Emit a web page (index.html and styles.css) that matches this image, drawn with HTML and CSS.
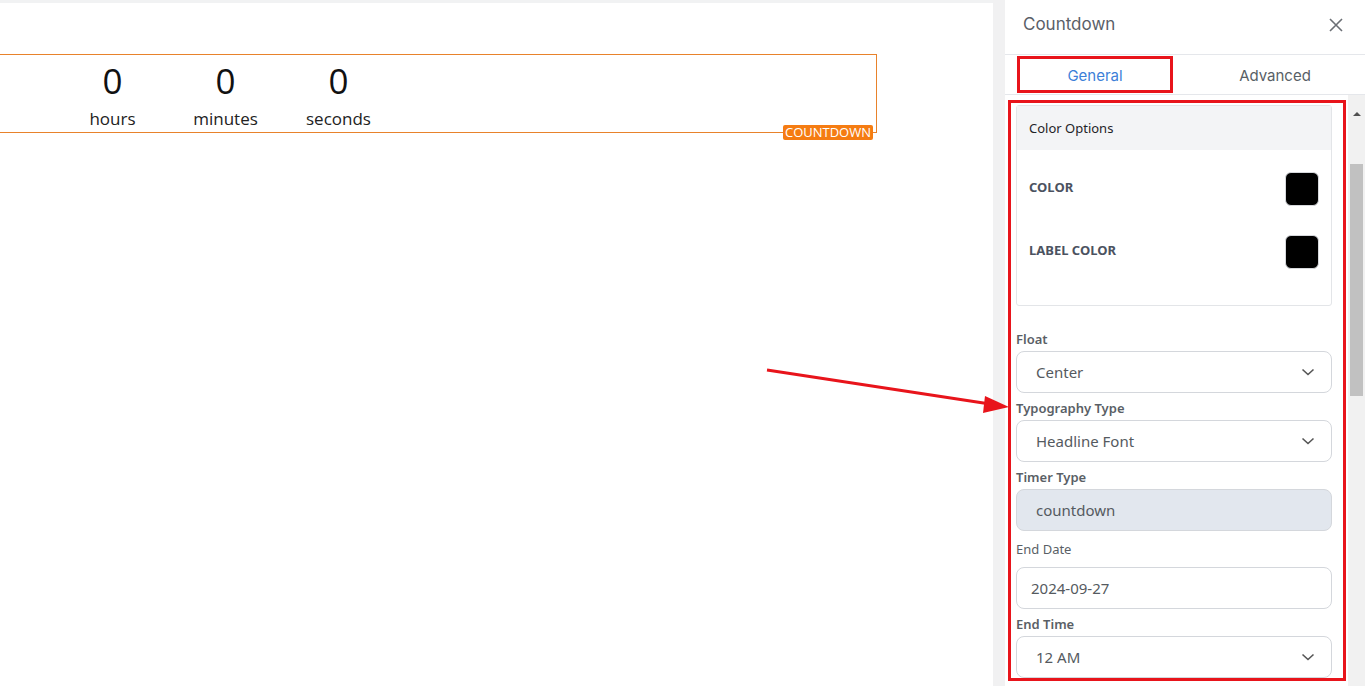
FILE: index.html
```html
<!DOCTYPE html>
<html lang="en">
<head>
    <meta charset="UTF-8">
    <title>Countdown Editor</title>
    <link rel="stylesheet" href="styles.css">
</head>
<body>

    <div class="canvas">
        <div class="countdown">
            <div class="unit">
                <div class="num">0</div>
                <div class="unit-label">hours</div>
            </div>
            <div class="unit">
                <div class="num">0</div>
                <div class="unit-label">minutes</div>
            </div>
            <div class="unit">
                <div class="num">0</div>
                <div class="unit-label">seconds</div>
            </div>
            <span class="badge">COUNTDOWN</span>
        </div>
    </div>

    <div class="gutter"></div>

    <div class="panel">
        <div class="panel-header">
            <span class="panel-title">Countdown</span>
            <svg class="close" width="16" height="16" viewBox="0 0 16 16">
                <path d="M2 2 L14 14 M14 2 L2 14" stroke="#6b6f75" stroke-width="1.6" fill="none"/>
            </svg>
        </div>
        <div class="tabs">
            <div class="tab active"><span>General</span></div>
            <div class="tab"><span>Advanced</span></div>
        </div>
        <div class="panel-body">
            <div class="scroll-content">
                <div class="highlight">
                    <div class="card">
                        <div class="card-head">Color Options</div>
                        <div class="card-body">
                            <div class="color-row">
                                <span class="color-label">COLOR</span>
                                <span class="swatch"></span>
                            </div>
                            <div class="color-row">
                                <span class="color-label">LABEL COLOR</span>
                                <span class="swatch"></span>
                            </div>
                        </div>
                    </div>

                    <div class="field">
                        <label>Float</label>
                        <div class="select">Center
                            <svg width="14" height="8" viewBox="0 0 14 8"><path d="M1.5 1.5 L7 6.5 L12.5 1.5" stroke="#555" stroke-width="1.6" fill="none"/></svg>
                        </div>
                    </div>
                    <div class="field">
                        <label>Typography Type</label>
                        <div class="select">Headline Font
                            <svg width="14" height="8" viewBox="0 0 14 8"><path d="M1.5 1.5 L7 6.5 L12.5 1.5" stroke="#555" stroke-width="1.6" fill="none"/></svg>
                        </div>
                    </div>
                    <div class="field">
                        <label>Timer Type</label>
                        <div class="select disabled">countdown</div>
                    </div>
                    <div class="field date">
                        <label>End Date</label>
                        <div class="select">2024-09-27</div>
                    </div>
                    <div class="field">
                        <label>End Time</label>
                        <div class="select">12 AM
                            <svg width="14" height="8" viewBox="0 0 14 8"><path d="M1.5 1.5 L7 6.5 L12.5 1.5" stroke="#555" stroke-width="1.6" fill="none"/></svg>
                        </div>
                    </div>
                </div>
            </div>
            <div class="scrollbar">
                <div class="arrow-up"></div>
                <div class="thumb"></div>
            </div>
        </div>
    </div>

    <svg class="pointer" width="1365" height="686" viewBox="0 0 1365 686">
        <line x1="767" y1="370" x2="990" y2="404" stroke="#e8141b" stroke-width="3"/>
        <polygon points="1009,407 985,396 983,413" fill="#e8141b"/>
    </svg>

</body>
</html>
```

FILE: styles.css
```css
body {
    margin: 0;
    width: 1365px;
    height: 686px;
    display: flex;
    overflow: hidden;
    background-color: #fff;
    font-family: "Noto Sans", Arial, sans-serif;
}
.canvas {
    width: 993px;
    border-top: 3px solid #f1f2f3;
    background-color: #fff;
}
.countdown {
    position: relative;
    display: flex;
    width: 879px;
    height: 79px;
    margin: 51px 0 0 -2px;
    padding-left: 57px;
    box-sizing: border-box;
    border: 1px solid #e8822b;
    font-family: "Open Sans", Arial, sans-serif;
}
.unit {
    width: 113px;
    text-align: center;
    color: #111;
}
.num {
    font-size: 35px;
    line-height: 44px;
    margin-top: 4px;
}
.unit-label {
    font-size: 17px;
    line-height: 22px;
    margin-top: 5px;
    color: #222;
}
.badge {
    position: absolute;
    right: 3px;
    bottom: -8px;
    background-color: #f57c12;
    color: #fff;
    font-size: 13px;
    line-height: 15px;
    padding: 0 2px;
    border-radius: 2px;
    font-family: "Open Sans", Arial, sans-serif;
}
.gutter {
    width: 12px;
    background-color: #f1f1f2;
}
.panel {
    width: 360px;
    display: flex;
    flex-direction: column;
    background-color: #fff;
}
.panel-header {
    height: 55px;
    border-bottom: 1px solid #e5e7eb;
    display: flex;
    align-items: center;
    justify-content: space-between;
    padding: 0 21px 6px 18px;
    box-sizing: border-box;
}
.panel-title {
    font-family: Inter, Arial, sans-serif;
    font-size: 17px;
    color: #5a6068;
}
.close {
    margin-top: 2px;
}
.tabs {
    display: flex;
    height: 40px;
    border-bottom: 1px solid #e5e7eb;
    box-sizing: border-box;
}
.tab {
    flex: 1;
    display: flex;
    padding: 1px 12px 1px;
    font-family: Inter, Arial, sans-serif;
    font-size: 15px;
    color: #595f66;
}
.tab span {
    flex: 1;
    display: flex;
    align-items: center;
    justify-content: center;
    padding-top: 1px;
    border: 3px solid transparent;
}
.tab.active span {
    border-color: #e8141b;
    color: #3d7fd8;
}
.panel-body {
    flex: 1;
    display: flex;
    overflow: hidden;
}
.scroll-content {
    flex: 1;
    padding: 5px 2px 0 3px;
}
.highlight {
    height: 581px;
    box-sizing: border-box;
    border: 3px solid #e8141b;
    padding: 2px 11px 0 5px;
    overflow: hidden;
}
.card {
    border: 1px solid #e3e5e8;
    border-radius: 3px;
}
.card-head {
    height: 44px;
    line-height: 44px;
    padding-left: 12px;
    background-color: #f3f4f6;
    font-size: 13px;
    color: #1f2328;
}
.card-body {
    padding: 22px 12px 36px;
    display: flex;
    flex-direction: column;
    gap: 29px;
}
.color-row {
    display: flex;
    align-items: center;
    justify-content: space-between;
}
.color-label {
    font-size: 13px;
    font-weight: bold;
    color: #4b5260;
    margin-top: -5px;
}
.swatch {
    width: 34px;
    height: 34px;
    box-sizing: border-box;
    background-color: #000;
    border: 1px solid #d6d8dc;
    border-radius: 6px;
}
.field {
    margin-top: 6px;
}
.highlight .card + .field {
    margin-top: 24px;
}
.field label {
    display: block;
    font-size: 13px;
    font-weight: 600;
    line-height: 18px;
    color: #5a5f66;
    margin-bottom: 3px;
}
.field.date {
    margin-top: 9px;
}
.field.date label {
    font-weight: normal;
    margin-bottom: 9px;
}
.select {
    height: 42px;
    box-sizing: border-box;
    border: 1px solid #d4d7dc;
    border-radius: 8px;
    display: flex;
    align-items: center;
    justify-content: space-between;
    padding: 0 16px 0 19px;
    font-size: 15px;
    color: #555a60;
}
.select.disabled {
    background-color: #e2e7ee;
}
.field.date .select {
    padding-left: 14px;
}
.scrollbar {
    width: 17px;
    background-color: #f1f1f1;
    display: flex;
    flex-direction: column;
    align-items: center;
}
.arrow-up {
    margin-top: 17px;
    width: 0;
    height: 0;
    border-left: 4px solid transparent;
    border-right: 4px solid transparent;
    border-bottom: 4px solid #505050;
}
.thumb {
    margin-top: 48px;
    width: 13px;
    height: 232px;
    background-color: #c1c1c1;
}
.pointer {
    position: absolute;
    left: 0;
    top: 0;
    pointer-events: none;
}
```
